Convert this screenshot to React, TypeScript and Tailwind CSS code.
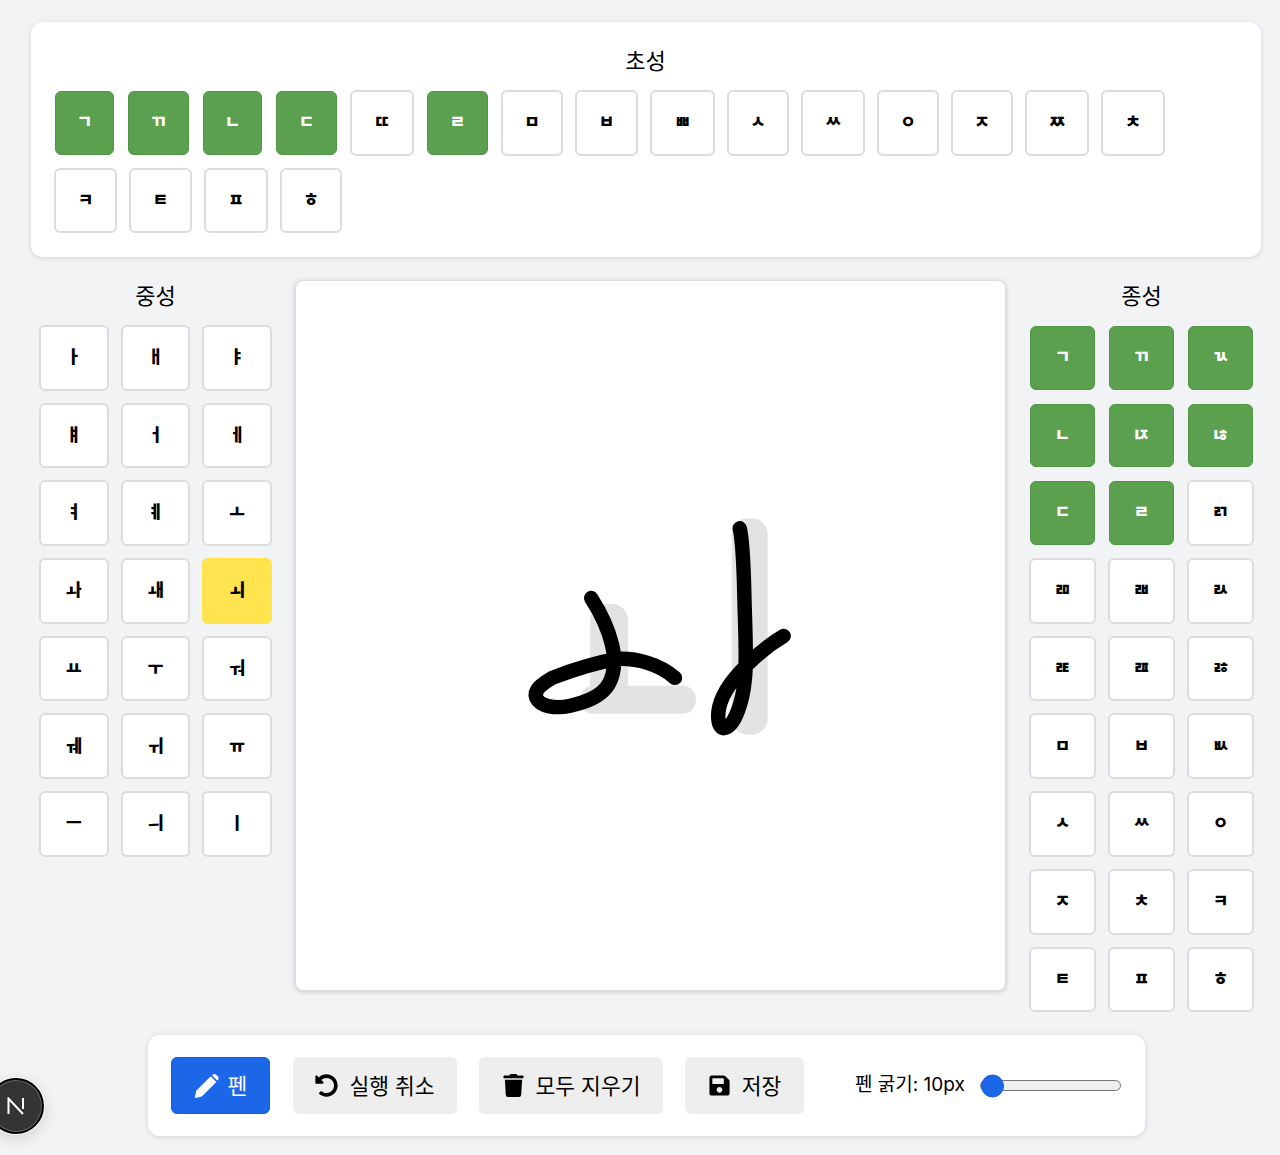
import { FaSave, FaTrash, FaUndoAlt } from "react-icons/fa";

const choseong = [
  { ch: "ㄱ", w: "w-[59px]", on: true },
  { ch: "ㄲ", w: "w-[61px]", on: true },
  { ch: "ㄴ", w: "w-[59px]", on: true },
  { ch: "ㄷ", w: "w-[61px]", on: true },
  { ch: "ㄸ", w: "w-[64px]" },
  { ch: "ㄹ", w: "w-[61px]", on: true },
  { ch: "ㅁ", w: "w-[62px]" },
  { ch: "ㅂ", w: "w-[63px]" },
  { ch: "ㅃ", w: "w-[65px]" },
  { ch: "ㅅ", w: "w-[62px]" },
  { ch: "ㅆ", w: "w-[64px]" },
  { ch: "ㅇ", w: "w-[62px]" },
  { ch: "ㅈ", w: "w-[62px]" },
  { ch: "ㅉ", w: "w-[64px]" },
  { ch: "ㅊ", w: "w-[64px]" },
  { ch: "ㅋ", w: "w-[63px]" },
  { ch: "ㅌ", w: "w-[63px]" },
  { ch: "ㅍ", w: "w-[64px]" },
  { ch: "ㅎ", w: "w-[62px]" },
];

const jungseong = "ㅏㅐㅑㅒㅓㅔㅕㅖㅗㅘㅙㅚㅛㅜㅝㅞㅟㅠㅡㅢㅣ".split("");
const jongseong = "ㄱㄲㄳㄴㄵㄶㄷㄹㄺㄻㄼㄽㄾㄿㅀㅁㅂㅄㅅㅆㅇㅈㅊㅋㅌㅍㅎ".split("");
const jongOn = "ㄱㄲㄳㄴㄵㄶㄷㄹ";

function KeyButton({
  ch,
  tone = "plain",
  className = "",
}: {
  ch: string;
  tone?: "plain" | "green" | "yellow";
  className?: string;
}) {
  const toneClass =
    tone === "green"
      ? "m-px border border-[#4f9645] bg-[#5aa04e] text-white"
      : tone === "yellow"
        ? "border-2 border-[#ffe34f] bg-[#ffe34f] text-black"
        : "border-2 border-[#dcdcdc] bg-white text-black";
  return (
    <button
      className={`flex items-center justify-center rounded-[6px] text-[17px] font-black ${toneClass} ${className}`}
    >
      {ch}
    </button>
  );
}

function PenIcon() {
  return (
    <svg viewBox="0 0 24 24" className="h-[25px] w-[25px]" fill="currentColor">
      <path d="M1.2 23.8 2.6 17 16 3.6 21 8.6 7.6 22Z" stroke="currentColor" strokeWidth="0.8" strokeLinejoin="round" />
      <path d="M18 1.6c1-.9 2.4-.9 3.3 0l1.700 1.700c.9.9.9 2.300 0 3.300l-.7.7-5-5Z" />
    </svg>
  );
}

function Drawing() {
  return (
    <svg viewBox="295 280 711 711" className="h-full w-full">
      {/* guide glyph */}
      <g fill="#e3e3e3">
        <rect x="590" y="604" width="38" height="109" rx="16" />
        <rect x="580" y="686" width="116" height="28" rx="13" />
        <rect x="732" y="518" width="36" height="217" rx="16" />
      </g>
      {/* pen strokes */}
      <g fill="none" stroke="#000" strokeWidth="14.5" strokeLinecap="round" strokeLinejoin="round">
        <path d="M591 598 C600 612 608 628 612 645 C616 662 614 678 606 688 C598 698 584 703 570 706 C556 709 540 707 536 698 C533 690 542 684 552 678 C570 671 595 663 617 659 C636 658 660 664 675 678" />
        <path d="M740 528 C744 545 744 575 745 610 C746 640 747 665 745 680 C743 702 735 725 726 728 C717 731 716 712 723 697 C731 678 760 650 784 636" />
      </g>
    </svg>
  );
}

export default function App() {
  return (
    <div className="relative h-[1155px] w-[1280px] overflow-hidden bg-[#f1f3f5] font-['Inter','Noto_Sans_CJK_KR',sans-serif] text-black">
      <div className="h-[22px]" />

      {/* 초성 */}
      <section className="ml-[31px] h-[235px] w-[1230px] rounded-[12px] bg-white pl-[23px] pr-6 pt-6 shadow-[0_1px_5px_rgba(0,0,0,0.13)]">
        <h2 className="mb-[14px] pt-px text-center text-[22px] leading-[29px]">초성</h2>
        <div className="flex flex-wrap gap-x-3 gap-y-3">
          {choseong.map((k) => (
            <KeyButton
              key={k.ch}
              ch={k.ch}
              tone={k.on ? "green" : "plain"}
              className={k.on ? `${k.w} h-[63.5px]` : `${k.w} h-[65.5px]`}
            />
          ))}
        </div>
      </section>

      <div className="mt-[23px] flex">
        {/* 중성 */}
        <section className="ml-[39px] w-[233px] pt-px">
          <h2 className="mb-[14px] pt-px text-center text-[22px] leading-[29px]">중성</h2>
          <div className="grid auto-rows-[65.7px] grid-cols-3 gap-3">
            {jungseong.map((ch) => (
              <KeyButton key={ch} ch={ch} tone={ch === "ㅚ" ? "yellow" : "plain"} />
            ))}
          </div>
        </section>

        <div className="ml-[23px] h-[711px] w-[711px] overflow-hidden rounded-[8px] border border-[#dddddd] bg-white shadow-[0_1px_5px_rgba(0,0,0,0.18)]">
          <Drawing />
        </div>

        {/* 종성 */}
        <section className="ml-[23px] w-[225px] pt-px">
          <h2 className="mb-[14px] pt-px text-center text-[22px] leading-[29px]">종성</h2>
          <div className="grid auto-rows-[65.7px] grid-cols-3 gap-3">
            {jongseong.map((ch) => (
              <KeyButton key={ch} ch={ch} tone={jongOn.includes(ch) ? "green" : "plain"} />
            ))}
          </div>
        </section>
      </div>

      {/* 도구 모음 */}
      <div className="ml-[148px] mt-[23px] flex h-[101px] w-[997px] items-center rounded-[12px] bg-white pl-[23px] shadow-[0_1px_6px_rgba(0,0,0,0.13)]">
        <button className="flex h-[57px] w-[99px] items-center justify-center gap-[9px] rounded-[6px] border border-[#1a5fd8] bg-[#1c66e8] text-[21.5px] text-white">
          <PenIcon />
          펜
        </button>
        <button className="ml-[23px] flex h-[57px] w-[164px] items-center justify-center gap-[11px] rounded-[6px] bg-[#eeeeee] text-[21.5px]">
          <FaUndoAlt className="h-[23px] w-[23px]" />
          실행 취소
        </button>
        <button className="ml-[22px] flex h-[57px] w-[184px] items-center justify-center gap-[11px] rounded-[6px] bg-[#eeeeee] text-[21.5px]">
          <FaTrash className="h-[23px] w-[23px]" />
          모두 지우기
        </button>
        <button className="ml-[22px] flex h-[57px] w-[119px] items-center justify-center gap-[11px] rounded-[6px] bg-[#eeeeee] text-[21.5px]">
          <FaSave className="h-[23px] w-[23px]" />
          저장
        </button>
        <span className="ml-[51px] w-[111px] whitespace-nowrap text-[19px]">펜 굵기: 10px</span>
        <div className="relative ml-[14px] h-[11px] w-[141px] rounded-full border border-[#777777] bg-[#efefef]">
          <div className="absolute left-0 top-1/2 h-[23px] w-[23px] -translate-y-1/2 rounded-full border border-[#1a5fd8] bg-[#1c66e8]" />
        </div>
      </div>

      {/* dev indicator */}
      <div className="absolute left-[-12px] top-[1078px] flex h-[56px] w-[56px] items-center justify-center rounded-full border-2 border-black bg-[#333333] shadow-[0_0_0_1px_#666666_inset,0_0_0_1px_#ffffff,0_4px_16px_rgba(0,0,0,0.15)]">
        <svg viewBox="0 0 18 18" className="h-[18px] w-[18px]">
          <path d="M1.500 17V1.500L16 17M16 1V12" fill="none" stroke="#fff" strokeWidth="2" />
        </svg>
      </div>
    </div>
  );
}
